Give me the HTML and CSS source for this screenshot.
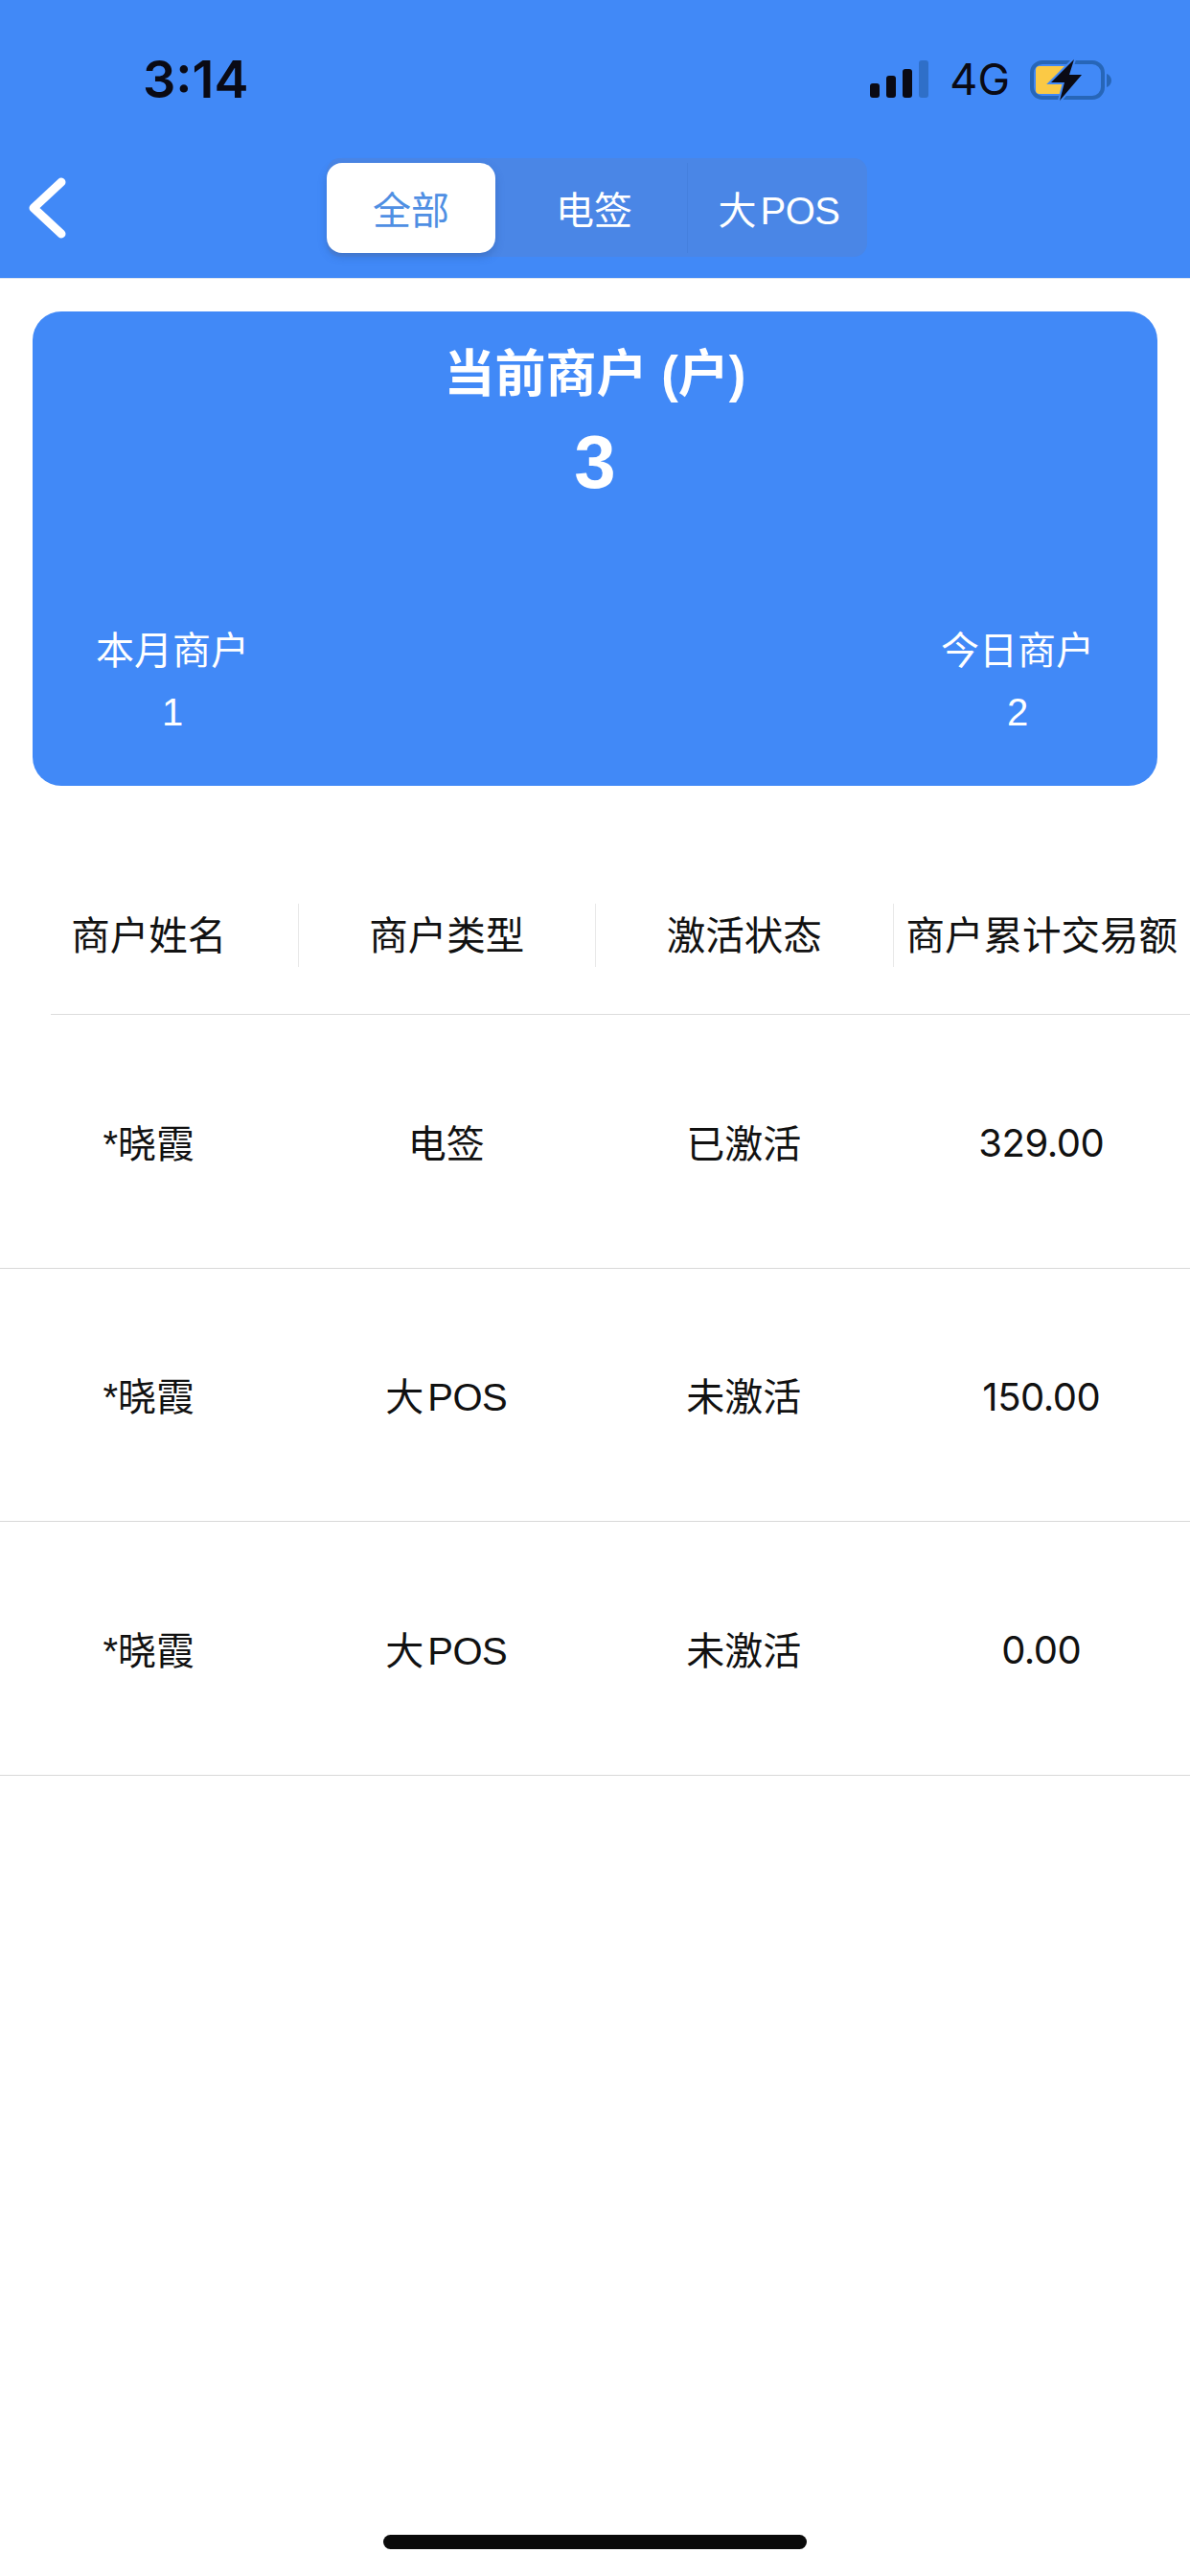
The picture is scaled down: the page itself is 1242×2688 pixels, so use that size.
FILE: index.html
```html
<!DOCTYPE html>
<html lang="zh-CN">

<head>
    <meta charset="UTF-8">
    <meta name="viewport" content="width=device-width, initial-scale=1.0">
    <title>商户列表</title>
    <link rel="stylesheet" href="styles.css">
</head>

<body>
    <header class="top">
        <div class="status">
            <span class="time">3:14</span>
            <div class="status-right">
                <svg class="signal" width="62" height="40" viewBox="0 0 62 40">
                    <rect x="0" y="24" width="10" height="15" rx="3" fill="#0a0a14"/>
                    <rect x="17" y="16" width="10" height="23" rx="3" fill="#0a0a14"/>
                    <rect x="34" y="9" width="10" height="30" rx="3" fill="#0a0a14"/>
                    <rect x="51" y="0" width="10" height="39" rx="3" fill="#2f6fc8"/>
                </svg>
                <span class="net">4G</span>
                <svg class="battery" width="88" height="48" viewBox="0 0 88 48">
                    <rect x="3" y="6" width="74" height="37" rx="11" fill="none" stroke="#2766b8" stroke-width="4"/>
                    <path d="M81 18c3 1 5 4 5 7s-2 6-5 7z" fill="#2766b8"/>
                    <path d="M7 14a4 4 0 0 1 4-4h29v29H11a4 4 0 0 1-4-4z" fill="#fbc945"/>
                    <path class="bolt" d="M47 3L23 27h14l-5 19 23-27H42z"/>
                </svg>
            </div>
        </div>
        <nav class="nav">
            <a class="back">
                <svg width="42" height="66" viewBox="0 0 42 66">
                    <path d="M36 6L7 33l29 27" fill="none" stroke="#fff" stroke-width="9" stroke-linecap="round" stroke-linejoin="round"/>
                </svg>
            </a>
            <div class="tabs">
                <span class="tab active">全部</span>
                <span class="tab tab-mid">电签</span>
                <span class="tab tab-last">大 POS</span>
            </div>
        </nav>
    </header>

    <section class="card">
        <div class="card-title">当前商户 (户)</div>
        <div class="card-num">3</div>
        <div class="card-stats">
            <div class="stat">
                <div>本月商户</div>
                <div>1</div>
            </div>
            <div class="stat">
                <div>今日商户</div>
                <div>2</div>
            </div>
        </div>
    </section>

    <section class="list">
        <div class="list-head">
            <div class="th">商户姓名</div>
            <div class="th">商户类型</div>
            <div class="th">激活状态</div>
            <div class="th">商户累计交易额</div>
        </div>
        <div class="row">
            <div>*晓霞</div>
            <div>电签</div>
            <div>已激活</div>
            <div class="amount">329.00</div>
        </div>
        <div class="row">
            <div>*晓霞</div>
            <div class="pos">大 POS</div>
            <div>未激活</div>
            <div class="amount">150.00</div>
        </div>
        <div class="row">
            <div>*晓霞</div>
            <div class="pos">大 POS</div>
            <div>未激活</div>
            <div class="amount">0.00</div>
        </div>
    </section>

    <div class="home-bar"></div>
</body>

</html>
```

FILE: styles.css
```css
* {
    box-sizing: border-box;
}

body {
    margin: 0;
    width: 1242px;
    height: 2688px;
    display: flex;
    flex-direction: column;
    background-color: #fff;
    color: #111;
    font-family: "Liberation Sans", "Noto Sans CJK SC", sans-serif;
    font-size: 40px;
    overflow: hidden;
}

/* blue header */
.top {
    height: 291px;
    background-color: #4189f7;
    border-bottom: 1px solid #dfe6f2;
}

.status {
    height: 165px;
    display: flex;
    align-items: center;
    justify-content: space-between;
    padding: 0 80px 0 149px;
}

.time {
    font-family: Inter, sans-serif;
    font-size: 54px;
    font-weight: 600;
    color: #0a0a14;
}

.status-right {
    display: flex;
    align-items: center;
}

.signal {
    margin-right: 21px;
}

.net {
    font-family: Inter, sans-serif;
    font-size: 45px;
    color: #0a0a14;
    margin-right: 20px;
}

.bolt {
    fill: #0a0a14;
    stroke: #4189f7;
    stroke-width: 4px;
    paint-order: stroke;
}

.nav {
    display: grid;
    grid-template-columns: 341px auto 1fr;
    align-items: center;
}

.back {
    display: flex;
    padding-left: 28px;
}

.tabs {
    display: flex;
    align-items: center;
    height: 103px;
    background-color: #4a86e6;
    border-radius: 14px;
}

.tab {
    height: 94px;
    display: flex;
    align-items: center;
    justify-content: center;
    color: #fff;
    white-space: nowrap;
}

.active {
    width: 176px;
    background-color: #fff;
    color: #4f8fe3;
    border-radius: 16px;
    box-shadow: 0 4px 8px rgba(40, 80, 150, 0.35);
}

.tab-mid {
    width: 200px;
    padding-left: 6px;
}

.tab-last {
    width: 188px;
    padding-left: 3px;
    border-left: 1px solid #4580de;
    word-spacing: -6px;
    letter-spacing: -0.5px;
}

/* summary card */
.card {
    margin: 34px 34px 0;
    height: 495px;
    padding: 30px 66px 0;
    background-color: #4189f7;
    border-radius: 30px;
    color: #fff;
    display: flex;
    flex-direction: column;
    align-items: center;
}

.card-title {
    font-size: 53px;
    font-weight: 700;
    line-height: 72px;
}

.card-num {
    font-size: 78px;
    font-weight: 700;
    line-height: 90px;
    margin-top: 10px;
}

.card-stats {
    width: 100%;
    display: flex;
    justify-content: space-between;
    margin-top: 120px;
}

.stat {
    text-align: center;
    line-height: 64px;
}

/* merchant table */
.list-head {
    margin: 73px 0 0 53px;
    height: 166px;
    display: grid;
    grid-template-columns: 257.5px repeat(3, 310.5px);
    align-items: center;
    border-bottom: 1px solid #dcdcdc;
}

.th {
    height: 66px;
    line-height: 68px;
    font-size: 40.5px;
    text-align: center;
    white-space: nowrap;
    border-left: 1px solid #e8e8e8;
}

.th:first-child {
    border-left: none;
    text-indent: -53px;
}

.row {
    height: 264.5px;
    display: grid;
    grid-template-columns: repeat(4, 310.5px);
    align-items: center;
    text-align: center;
    border-bottom: 1px solid #d8d8d8;
}

.pos {
    word-spacing: -6px;
    letter-spacing: -0.5px;
}

.amount {
    padding-top: 4px;
    font-family: Inter, sans-serif;
    letter-spacing: -0.5px;
}

.home-bar {
    width: 442px;
    height: 15px;
    margin: auto auto 28px;
    background-color: #0a0a0a;
    border-radius: 8px;
}
```
